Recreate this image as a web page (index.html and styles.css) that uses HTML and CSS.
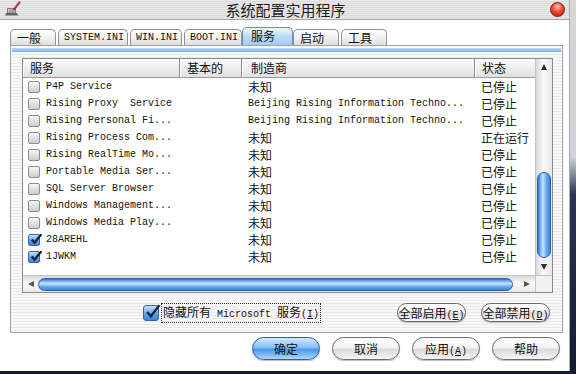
FILE: index.html
```html
<!DOCTYPE html>
<html>
<head>
    <title>系统配置实用程序</title>
    <link rel="stylesheet" href="styles.css">
</head>
<body>
    <div class="window">
        <div class="titlebar">
            <svg class="app-icon" viewBox="0 0 16 16">
                <path d="M1 13h11l1.5 2.5H0z" fill="#6b6b6b"/>
                <path d="M2.5 8.5h8v4.5h-8z" fill="#c9c9c9" stroke="#555" stroke-width="0.7"/>
                <path d="M4 10h5M4 11.5h5" stroke="#777" stroke-width="0.6"/>
                <path d="M8 9.5L14 1.5l1.4 1L9.3 10.4z" fill="#c8305a" stroke="#7a1d38" stroke-width="0.5"/>
            </svg>
            <div class="title">系统配置实用程序</div>
            <span class="close"></span>
        </div>

        <div class="content">
            <div class="tabs">
                <div class="tab">一般</div>
                <div class="tab mono">SYSTEM.INI</div>
                <div class="tab mono">WIN.INI</div>
                <div class="tab mono">BOOT.INI</div>
                <div class="tab active">服务</div>
                <div class="tab">启动</div>
                <div class="tab">工具</div>
            </div>

            <div class="panel">
                <div class="panel-bar"></div>

                <div class="list">
                    <div class="list-main">
                        <div class="list-head">
                            <div class="hcell c1">服务</div>
                            <div class="hcell c2">基本的</div>
                            <div class="hcell c3">制造商</div>
                            <div class="hcell c4">状态</div>
                        </div>
                        <div class="row">
                            <div class="cell c1"><span class="check"></span><span class="mono">P4P Service</span></div>
                            <div class="cell c2"></div>
                            <div class="cell c3">未知</div>
                            <div class="cell c4">已停止</div>
                        </div>
                        <div class="row">
                            <div class="cell c1"><span class="check"></span><span class="mono">Rising Proxy  Service</span></div>
                            <div class="cell c2"></div>
                            <div class="cell c3 mono">Beijing Rising Information Techno...</div>
                            <div class="cell c4">已停止</div>
                        </div>
                        <div class="row">
                            <div class="cell c1"><span class="check"></span><span class="mono">Rising Personal Fi...</span></div>
                            <div class="cell c2"></div>
                            <div class="cell c3 mono">Beijing Rising Information Techno...</div>
                            <div class="cell c4">已停止</div>
                        </div>
                        <div class="row">
                            <div class="cell c1"><span class="check"></span><span class="mono">Rising Process Com...</span></div>
                            <div class="cell c2"></div>
                            <div class="cell c3">未知</div>
                            <div class="cell c4">正在运行</div>
                        </div>
                        <div class="row">
                            <div class="cell c1"><span class="check"></span><span class="mono">Rising RealTime Mo...</span></div>
                            <div class="cell c2"></div>
                            <div class="cell c3">未知</div>
                            <div class="cell c4">已停止</div>
                        </div>
                        <div class="row">
                            <div class="cell c1"><span class="check"></span><span class="mono">Portable Media Ser...</span></div>
                            <div class="cell c2"></div>
                            <div class="cell c3">未知</div>
                            <div class="cell c4">已停止</div>
                        </div>
                        <div class="row">
                            <div class="cell c1"><span class="check"></span><span class="mono">SQL Server Browser</span></div>
                            <div class="cell c2"></div>
                            <div class="cell c3">未知</div>
                            <div class="cell c4">已停止</div>
                        </div>
                        <div class="row">
                            <div class="cell c1"><span class="check"></span><span class="mono">Windows Management...</span></div>
                            <div class="cell c2"></div>
                            <div class="cell c3">未知</div>
                            <div class="cell c4">已停止</div>
                        </div>
                        <div class="row">
                            <div class="cell c1"><span class="check"></span><span class="mono">Windows Media Play...</span></div>
                            <div class="cell c2"></div>
                            <div class="cell c3">未知</div>
                            <div class="cell c4">已停止</div>
                        </div>
                        <div class="row">
                            <div class="cell c1">
                                <span class="check on"><svg viewBox="0 0 12 12"><path d="M2.5 6l2.6 3L11.5 1" /></svg></span>
                                <span class="mono">28AREHL</span>
                            </div>
                            <div class="cell c2"></div>
                            <div class="cell c3">未知</div>
                            <div class="cell c4">已停止</div>
                        </div>
                        <div class="row">
                            <div class="cell c1">
                                <span class="check on"><svg viewBox="0 0 12 12"><path d="M2.5 6l2.6 3L11.5 1" /></svg></span>
                                <span class="mono">1JWKM</span>
                            </div>
                            <div class="cell c2"></div>
                            <div class="cell c3">未知</div>
                            <div class="cell c4">已停止</div>
                        </div>
                    </div>

                    <div class="vscroll">
                        <div class="arrow-box v"><span class="tri up"></span></div>
                        <div class="thumb vthumb"></div>
                        <div class="arrow-box v last"><span class="tri down"></span></div>
                    </div>
                    <div class="hscroll">
                        <div class="arrow-box h"><span class="tri left"></span></div>
                        <div class="thumb hthumb"></div>
                        <div class="arrow-box h last"><span class="tri right"></span></div>
                    </div>
                    <div class="corner"></div>
                </div>

                <div class="panel-foot">
                    <label class="hide-ms">
                        <span class="check big on"><svg viewBox="0 0 16 16"><path d="M3 8.5l3.5 4L14.5 2" /></svg></span>
                        <span class="focus">隐藏所有<span class="mono"> Microsoft </span>服务<span class="mono">(<u>I</u>)</span></span>
                    </label>
                    <button class="aqua small">全部启用<span class="mono">(<u>E</u>)</span></button>
                    <button class="aqua small">全部禁用<span class="mono">(<u>D</u>)</span></button>
                </div>
            </div>

            <div class="actions">
                <button class="aqua default">确定</button>
                <button class="aqua">取消</button>
                <button class="aqua">应用<span class="mono">(<u>A</u>)</span></button>
                <button class="aqua">帮助</button>
            </div>
        </div>
    </div>
</body>
</html>
```

FILE: styles.css
```css
body {
    margin: 0;
    width: 576px;
    height: 374px;
    overflow: hidden;
    font-family: "Noto Sans CJK SC", sans-serif;
    font-size: 12px;
    color: #111;
    background: linear-gradient(#d6d6d6 0, #cfd2d8 42%, #2b3552 52%, #141b2c 100%);
}

.mono {
    font-family: "Liberation Mono", "Noto Sans CJK SC", monospace;
    font-size: 10px;
    white-space: pre;
}

.window {
    width: 570px;
    height: 371px;
    box-sizing: border-box;
    border-right: 1px solid #a9a9a9;
    background: #fff;
    display: flex;
    flex-direction: column;
}

/* title bar */
.titlebar {
    height: 20px;
    flex: none;
    box-sizing: border-box;
    border-bottom: 1px solid #a4a4a4;
    background: repeating-linear-gradient(#e9e9e9 0 1px, #dcdcdc 1px 2px);
    display: flex;
    align-items: center;
    padding: 0 4px 0 5px;
}

.app-icon {
    width: 16px;
    height: 16px;
    margin-top: -3px;
}

.title {
    flex: 1;
    text-align: center;
    font-size: 15px;
    line-height: 20px;
    color: #1c1c1c;
}

.close {
    width: 13px;
    height: 13px;
    border-radius: 50%;
    border: 1px solid #7a1a10;
    background: radial-gradient(circle at 50% 30%, #ffc0b4 0, #f04a34 45%, #a8170a 100%);
}

.content {
    padding: 7px 0 0 10px;
    flex: 1;
}

/* tabs */
.tabs {
    display: flex;
    align-items: flex-end;
    gap: 2px;
    height: 18px;
}

.tab {
    height: 16px;
    min-width: 46px;
    box-sizing: border-box;
    padding: 0 4px 0 6px;
    border: 1px solid #909090;
    border-bottom: none;
    border-radius: 5px 5px 0 0;
    background: linear-gradient(#ffffff, #eeeeee 60%, #dddddd);
    line-height: 15px;
}

.tab.mono {
    font-size: 10px;
    padding: 0 3px 0 5px;
}

.tab.active {
    height: 18px;
    min-width: 51px;
    padding-left: 8px;
    margin: 0 -2px;
    border-color: #6a8fbf;
    background: linear-gradient(#f2f8fe, #bcdaf7 50%, #a2ccf3);
    line-height: 16px;
    position: relative;
    z-index: 1;
}

/* tab panel */
.panel {
    width: 553px;
    height: 288px;
    box-sizing: border-box;
    border: 1px solid #a2a2a2;
    background: repeating-linear-gradient(#f8f8f8 0 2px, #e9e9e9 2px 3px);
    display: flex;
    flex-direction: column;
}

.panel-bar {
    margin: 1px 1px 0;
    height: 4px;
    border-top: 1px solid #fff;
    background: linear-gradient(#bddaf6, #7cb0e6);
}

.list {
    margin: 6px 0 0 11px;
    width: 531px;
    height: 235px;
    box-sizing: border-box;
    border: 1px solid #8a8a8a;
    background: #fff;
    display: grid;
    grid-template-columns: 512px 17px;
    grid-template-rows: 216px 17px;
}

.list-main {
    overflow: hidden;
}

.list-head {
    display: flex;
    height: 19px;
    box-sizing: border-box;
    border-bottom: 1px solid #999;
    background: linear-gradient(#fbfbfb, #e1e1e1);
}

.hcell {
    box-sizing: border-box;
    border-right: 1px solid #8c8c8c;
    box-shadow: inset 1px 0 #fff;
    line-height: 18px;
    padding-left: 7px;
}

.hcell.c3 {
    padding-left: 9px;
}

.hcell.c4 {
    border-right: none;
}

.c1 { width: 157px; }
.c2 { width: 62px; }
.c3 { width: 233px; }
.c4 { width: 60px; }

.row {
    display: flex;
    height: 17px;
    align-items: center;
}

.cell {
    box-sizing: border-box;
    white-space: nowrap;
    overflow: hidden;
}

.cell.c1 {
    display: flex;
    align-items: center;
    gap: 6px;
    padding-left: 5px;
}

.cell.c3 {
    padding-left: 6px;
}

.cell.c4 {
    padding-left: 6px;
}

/* checkboxes */
.check {
    width: 12px;
    height: 12px;
    flex: none;
    box-sizing: border-box;
    border: 1px solid #8d8d8d;
    border-radius: 2px;
    background: linear-gradient(#f6f6f6, #cdcdcd);
    display: inline-block;
    position: relative;
}

.check.on {
    border-color: #3d64a0;
    background: linear-gradient(#c6e0fa, #5c9ee8 60%, #3f84dc);
}

.check svg {
    position: absolute;
    left: 0;
    top: -2px;
    width: 13px;
    height: 13px;
    fill: none;
    stroke: #16233c;
    stroke-width: 2.2;
}

.check.big {
    width: 16px;
    height: 16px;
    border-radius: 3px;
}

.check.big svg {
    width: 17px;
    height: 17px;
    top: -3px;
}

/* scrollbars */
.vscroll {
    display: flex;
    flex-direction: column;
    align-items: center;
    border-left: 1px solid #c4c4c4;
    background: linear-gradient(to right, #d9d9d9, #fafafa 45%, #e8e8e8);
}

.hscroll {
    display: flex;
    align-items: center;
    border-top: 1px solid #c4c4c4;
    background: linear-gradient(#d9d9d9, #fafafa 45%, #e8e8e8);
}

.corner {
    border-top: 1px solid #c4c4c4;
    border-left: 1px solid #c4c4c4;
    background: #f1f1f1;
}

.arrow-box {
    display: flex;
    align-items: center;
    justify-content: center;
    flex: none;
}

.arrow-box.v {
    width: 100%;
    height: 16px;
}

.arrow-box.v.last {
    height: 17px;
}

.arrow-box.h {
    width: 15px;
    height: 100%;
}

.arrow-box.h.last {
    width: 17px;
    margin-left: auto;
}

.tri {
    width: 0;
    height: 0;
    border: 3.5px solid transparent;
}

.tri.up { border-bottom: 6px solid #2a2a2a; border-top: none; }
.tri.down { border-top: 6px solid #2a2a2a; border-bottom: none; }
.tri.left { border-right: 6px solid #555; border-left: none; }
.tri.right { border-left: 6px solid #555; border-right: none; }

.thumb {
    box-sizing: border-box;
    border: 1px solid #2a5ead;
    border-radius: 7px;
}

.vthumb {
    width: 14px;
    height: 86px;
    margin-top: auto;
    background: linear-gradient(to right, #2f6ccc 0, #8cc0f5 25%, #c4e2ff 42%, #6aa8ee 70%, #3c83de 100%);
}

.hthumb {
    width: 475px;
    height: 13px;
    background: linear-gradient(#2f6ccc 0, #8cc0f5 25%, #c4e2ff 42%, #6aa8ee 70%, #3c83de 100%);
}

/* panel footer */
.panel-foot {
    display: flex;
    align-items: center;
    gap: 15px;
    height: 19px;
    margin-top: 10px;
    padding: 0 12px 0 132px;
}

.hide-ms {
    display: flex;
    align-items: center;
    margin-right: auto;
}

.focus {
    margin-left: 3px;
    padding: 0 1px;
    outline: 1px dotted #333;
    line-height: 15px;
}

/* aqua buttons */
.aqua {
    font-family: inherit;
    font-size: 12px;
    color: #111;
    height: 23px;
    width: 68px;
    padding: 0;
    border: 1px solid #6c6c6c;
    border-radius: 12px;
    background: linear-gradient(#ffffff 0, #f3f3f3 45%, #dadada 55%, #f6f6f6 100%);
    box-shadow: 0 1px 1px rgba(0, 0, 0, 0.25);
    white-space: nowrap;
}

.aqua.small {
    height: 19px;
    width: 69px;
    border-radius: 10px;
}

.aqua.default {
    border-color: #2f5e9e;
    background: linear-gradient(#d2e8fd 0, #86c0f6 45%, #4d98ea 55%, #a9d6ff 100%);
}

.actions {
    display: flex;
    justify-content: flex-end;
    gap: 12px;
    margin-top: 4px;
    padding-right: 9px;
}
```
